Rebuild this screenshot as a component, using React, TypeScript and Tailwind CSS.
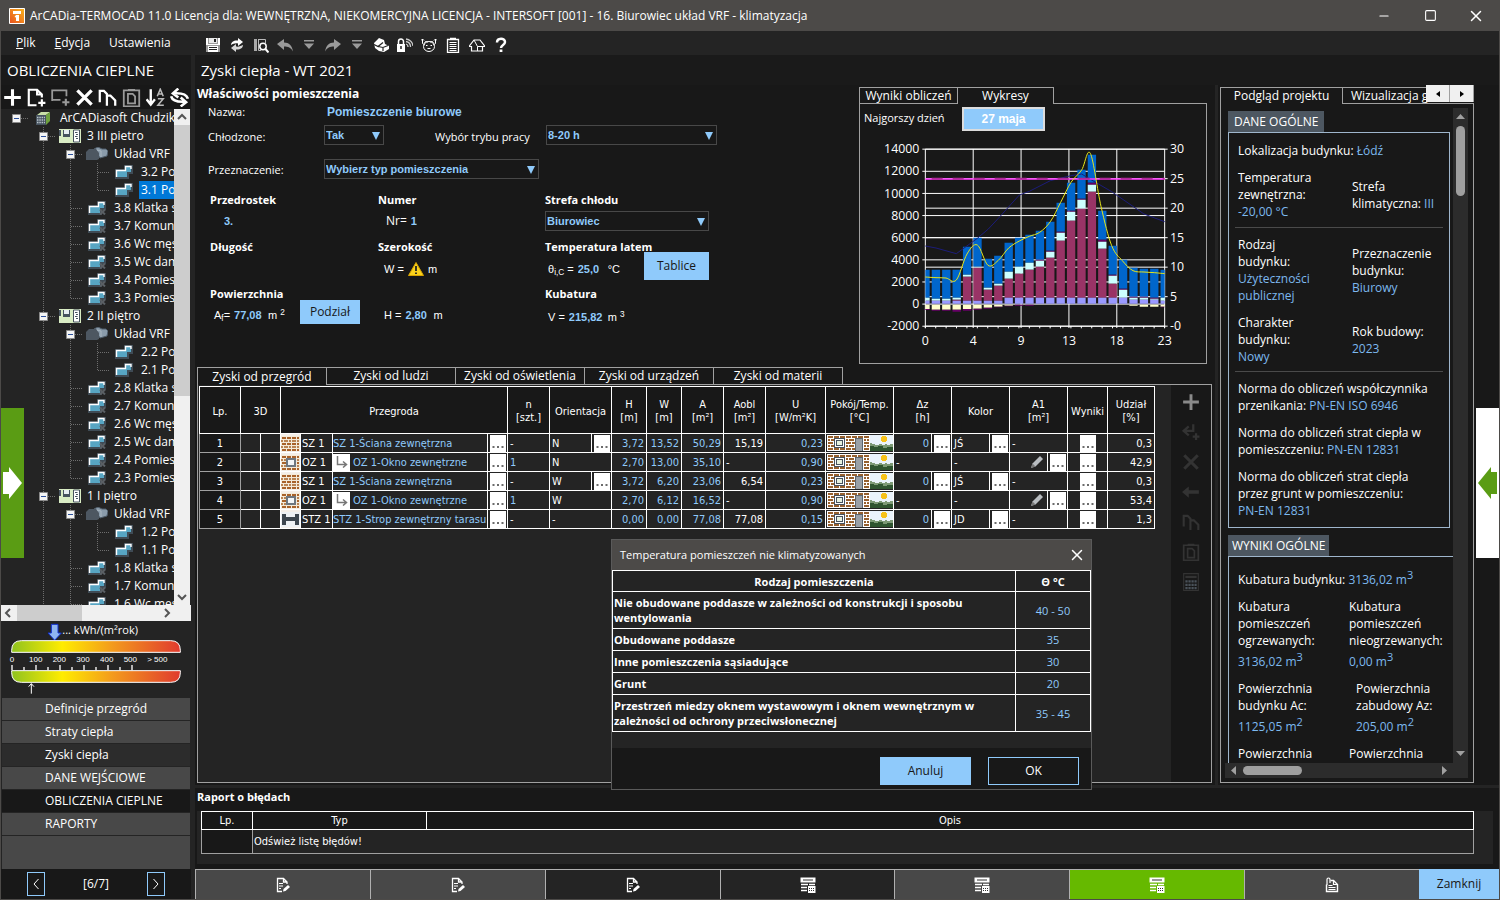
import React from "react";
import { Minus, Square, X } from "lucide-react";

type IconProps = { name: string; className?: string };

// small monochrome tool icons, 16x16 grid
const Icon = ({ name, className = "size-4" }: IconProps) => {
  const shapes: Record<string, React.ReactNode> = {
    save: (
      <>
        <path d="M1 1h14v14H1z" fill="#9a9a9a" />
        <path d="M1 1h2v6h10V1h2v7H1z" fill="#fff" />
        <path d="M4 1h8v5H4z" fill="#e8e8e8" />
        <path d="M9 2h2v3H9z" fill="#242424" />
        <path d="M3 9h10v6H3z" fill="#fff" />
        <path d="M4 10.500h8M4 12.500h8" stroke="#242424" />
      </>
    ),
    refresh: (
      <g fill="#fff">
        <path d="M2 8c0-3 3-5 7-4.500V1l5 4-5 4V6.500C6 6 4 7 2 8z" />
        <path d="M14 8c0 3-3 5-7 4.500V15l-5-4 5-4v2.500c3 .5 5-.5 7-1.500z" fill="#d8d8d8" />
      </g>
    ),
    preview: (
      <>
        <path d="M1 2h3v12H1z" fill="#aaa" />
        <path d="M5.500 2.500h7V6M5.500 2v11.500H8" fill="none" stroke="#bbb" />
        <circle cx="10" cy="9.500" r="3.200" fill="none" stroke="#fff" strokeWidth="1.500" />
        <path d="M12.500 12l3 3.500" stroke="#fff" strokeWidth="2" />
      </>
    ),
    undo: <path d="M0 7l7-5v3.500c5 0 8 3 9 9-2-4-5-5-9-5V13z" fill="#9a9a9a" />,
    redo: <path d="M16 7L9 2v3.500c-5 0-8 3-9 9 2-4 5-5 9-5V13z" fill="#9a9a9a" />,
    drop: <path d="M3 3h10v1.500H3zM3 6.500h10L8 12z" fill="#9a9a9a" />,
    cube: (
      <>
        <path d="M1 6l5-5 5 2 1 4 4 2v3l-5 3-5-1-4-3z" fill="#fff" />
        <path d="M1 7.500l4 2 5-4M5 9.500l5 1 5-2M10 10.500V14" fill="none" stroke="#242424" strokeWidth="1.200" />
      </>
    ),
    lock: (
      <>
        <path d="M0 7h8v8H0z" fill="#fff" />
        <path d="M1.500 7V4.500a2.500 2.500 0 015 0V7" fill="none" stroke="#fff" strokeWidth="1.500" />
        <path d="M4 9v3" stroke="#242424" strokeWidth="1.500" />
        <path d="M9 7a3 3 0 012 3M9 4.500a5.500 5.500 0 014.500 5.500M9 2a8 8 0 017 7" fill="none" stroke="#ccc" strokeWidth="1.300" />
      </>
    ),
    pig: (
      <>
        <path d="M0 3.500L1.500 2 3 3.500M1.500 2v4.500L4 8M16 3.500L14.500 2 13 3.500M14.500 2v4.500L12 8" fill="none" stroke="#fff" />
        <ellipse cx="8" cy="9.500" rx="5.500" ry="5" fill="none" stroke="#fff" />
        <path d="M3.500 6l1-1.500L7 5M12.500 6l-1-1.500L9 5M5 8.500h1.500M9.500 8.500H11M6.500 11.500h3" fill="none" stroke="#fff" />
      </>
    ),
    list: (
      <>
        <path d="M2.500 2.500h11v13h-11zM5 1.500h6" fill="none" stroke="#fff" strokeWidth="1.300" />
        <path d="M4.500 5.500h7M4.500 7.500h7M4.500 9.500h7M4.500 11.500h7M4.500 13.500h7" stroke="#fff" />
      </>
    ),
    house: (
      <>
        <path d="M0 9.500L5 3h6l5 6.500h-2.500V14h-11V9.500z" fill="none" stroke="#fff" strokeWidth="1.200" />
        <path d="M5 3l3.500 6.500V14M8.500 9.500h5" fill="none" stroke="#fff" />
      </>
    ),
    help: (
      <>
        <path d="M4 5.500c0-5 8-5 8-.5 0 3-4 2.800-4 6" fill="none" stroke="#fff" strokeWidth="2.500" />
        <path d="M6.600 12.500h2.800V15H6.600z" fill="#fff" />
      </>
    ),
    plus: <path d="M8 1v14M1 8h14" stroke="currentColor" strokeWidth="2.600" />,
    addPage: (
      <>
        <path d="M8 14.500H1.500v-13h7l4 4V8M8.500 1.500v4h4" fill="none" stroke="currentColor" strokeWidth="1.800" />
        <path d="M12.500 9.500v6M9.500 12.500h6" stroke="currentColor" strokeWidth="1.800" />
      </>
    ),
    addRoom: (
      <>
        <path d="M1 11V2h12v5M1 10h7" fill="none" stroke="#999" strokeWidth="1.500" />
        <path d="M12.500 9v6M9.500 12h6" stroke="#999" strokeWidth="1.800" />
      </>
    ),
    cross: <path d="M2 2l12 12M14 2L2 14" stroke="currentColor" strokeWidth="2.800" />,
    copy: (
      <path d="M1.500 12V2.500h3.500L7.500 5v8M7.500 15V6.500h3l4 4V15" fill="none" stroke="currentColor" strokeWidth="1.900" />
    ),
    paste: (
      <>
        <path d="M1.500 2h13v13.500h-13zM5 1.500h6" fill="none" stroke="currentColor" strokeWidth="1.500" />
        <path d="M5 5h4l2 2v6H5z" fill="none" stroke="currentColor" strokeWidth="1.500" />
      </>
    ),
    sort: (
      <>
        <path d="M4 1v12M0.500 9.500L4 14l3.500-4.500" fill="none" stroke="#fff" strokeWidth="2" />
        <path d="M9.500 7L12 1l2.500 6M10.300 5h3.400M10 9h4.500L10 14.500h5" fill="none" stroke="#bbb" strokeWidth="1.300" />
      </>
    ),
    sync: (
      <g fill="none" stroke="#fff" strokeWidth="2.200">
        <path d="M15 9c-1-4-5-5-12-4.500M7 .5l-4.500 4L7 8" />
        <path d="M1 7c1 4 5 5 12 4.500M9 8l4.500 4L9 15.500" />
      </g>
    ),
    enterPlus: (
      <>
        <path d="M10 1v6H3M6 3L1.500 7 6 11" fill="none" stroke="currentColor" strokeWidth="2" />
        <path d="M12.500 9v6M9.500 12h6" stroke="currentColor" strokeWidth="2" />
      </>
    ),
    left: <path d="M0 8l6-5v3.500h9v3H6V13z" fill="currentColor" />,
    calc: (
      <>
        <path d="M1.500.5h13v15h-13z" fill="none" stroke="currentColor" />
        <path d="M3 3.500h10" stroke="currentColor" strokeWidth="2" />
        <path d="M3 7.500h10M3 10.500h10M3 13.500h10" stroke="#4a525a" strokeWidth="2" strokeDasharray="2 .7" />
      </>
    ),
    docEdit: (
      <>
        <path d="M12 7V5L8.500 1.500h-6v13H7M8.500 1.500V5H12" fill="none" stroke="#fff" strokeWidth="1.300" />
        <path d="M4 6.500h4M4 9h4M4 11.500h2" stroke="#fff" />
        <path d="M8 14.500l.5-2.500L13 8l2 2-4.500 4z" fill="#fff" />
      </>
    ),
    report: (
      <>
        <path d="M0.500 0.500h15v5h-15z" fill="#fff" />
        <path d="M3 3h10" stroke="#333" />
        <path d="M1 7.500h7M1 10.500h6M1 13.500h6M9 7.500h6" stroke="#fff" strokeWidth="1.500" />
        <path d="M8 9h7.500v7H8z" fill="#fff" />
        <path d="M9 11.500h5M9 13.500h5" stroke="#333" strokeDasharray="1 1" />
      </>
    ),
    clipDoc: (
      <>
        <path d="M6.500 3.500h3l4 4v7h-11v-7" fill="none" stroke="#fff" strokeWidth="1.400" />
        <path d="M3 8V2.500C3 .5 6 .5 6 2.500V6M9.500 3.500v4h4" fill="none" stroke="#fff" strokeWidth="1.200" />
        <path d="M4.500 8.500h4M4.500 10.500h7M4.500 12.500h7" stroke="#fff" />
      </>
    ),
  };
  return (
    <svg viewBox="0 0 16 16" className={className} aria-hidden="true">
      {shapes[name]}
    </svg>
  );
};

const TitleBar = () => (
  <header className="flex h-[31px] shrink-0 items-center bg-[#4c4a48] pl-2 text-xs">
    <svg viewBox="0 0 16 16" className="mr-[5px] size-4" aria-hidden="true">
      <defs>
        <linearGradient id="logo" x1="0" y1="1" x2="1" y2="0">
          <stop offset="0" stopColor="#e8501e" />
          <stop offset="1" stopColor="#f9b51c" />
        </linearGradient>
      </defs>
      <path d="M.5.5h15v15H.5z" fill="url(#logo)" stroke="#fff" />
      <path d="M4 3h8v3H4zM7 7h3v6H7V9.500L5.500 9z" fill="#fff" />
    </svg>
    <span>
      ArCADia-TERMOCAD 11.0 Licencja dla: WEWNĘTRZNA, NIEKOMERCYJNA LICENCJA - INTERSOFT [001] - 16. Biurowiec układ VRF
      - klimatyzacja
    </span>
    <div className="ml-auto flex">
      <button aria-label="Minimalizuj" className="grid w-[46px] place-items-center">
        <Minus size={14} strokeWidth={2} />
      </button>
      <button aria-label="Maksymalizuj" className="grid w-[46px] place-items-center">
        <Square size={13} strokeWidth={2} />
      </button>
      <button aria-label="Zamknij okno" className="grid w-[46px] place-items-center">
        <X size={18} strokeWidth={2} />
      </button>
    </div>
  </header>
);

const tools = ["save", "refresh", "preview", "undo", "drop", "redo", "drop", "cube", "lock", "pig", "list", "house", "help"];

const MenuBar = () => (
  <nav className="flex h-6 shrink-0 items-center bg-[#242424] text-xs">
    <div className="flex w-[204px] pl-[15px]">
      <button className="mr-[19px]">
        <u>P</u>lik
      </button>
      <button className="mr-[19px]">
        <u>E</u>dycja
      </button>
      <button>Ustawienia</button>
    </div>
    <div className="flex gap-2 pt-[3px]">
      {tools.map((t, i) => (
        <button key={i} aria-label={t}>
          <Icon name={t} />
        </button>
      ))}
    </div>
  </nav>
);

// ---------- tree ----------

type TreeRow = { level: number; kind: "root" | "floor" | "system" | "room" | "roomOff"; label: string; last?: boolean; selected?: boolean };

const floor = (n: number, name: string): TreeRow[] => [
  { level: 1, kind: "floor", label: name },
  { level: 2, kind: "system", label: "Układ VRF" },
  { level: 3, kind: "room", label: `${n}.2 Po` },
  { level: 3, kind: "room", label: `${n}.1 Po`, last: true, selected: n === 3 },
  { level: 2, kind: "roomOff", label: `${n}.8 Klatka s` },
  { level: 2, kind: "roomOff", label: `${n}.7 Komuni` },
  { level: 2, kind: "roomOff", label: `${n}.6 Wc męs` },
  { level: 2, kind: "roomOff", label: `${n}.5 Wc dam` },
  { level: 2, kind: "roomOff", label: `${n}.4 Pomiesz` },
  { level: 2, kind: "roomOff", label: `${n}.3 Pomiesz`, last: true },
];

const treeRows: TreeRow[] = [
  { level: 0, kind: "root", label: "ArCADiasoft Chudzik" },
  ...floor(3, "3 III pietro"),
  ...floor(2, "2 II piętro"),
  ...floor(1, "1 I piętro").slice(0, 7),
];

const TreeIcon = ({ kind }: { kind: TreeRow["kind"] }) => {
  if (kind === "root")
    return (
      <svg viewBox="0 0 15 15" className="size-[15px]">
        <path d="M1 4l4-3h9l-4 3z" fill="#c9dfa8" />
        <path d="M10 4l4-3v9l-4 4z" fill="#6fa23f" />
        <path d="M0 4h10v10H0z" fill="#46525e" />
        <path d="M1 6.500h8M1 9h8M1 11.500h8" stroke="#b9c4cc" strokeWidth="1.500" strokeDasharray="1.500 .8" />
      </svg>
    );
  if (kind === "floor")
    return (
      <svg viewBox="0 0 22 14" className="h-[14px] w-[22px]">
        <path d="M0 0h22v14H0z" fill="#d9ecc4" />
        <path d="M0 1h2v6H0zM4 1h7v7H4z" fill="#46525e" />
        <path d="M5 1h5v4H5z" fill="#e8eef2" />
        <path d="M14.500 1h6v12h-6z" fill="#fff" stroke="#46525e" />
        <path d="M16 3.500h2.500M17 5.500h2M16 7.500h2.500M17 9.500h2" stroke="#46525e" />
      </svg>
    );
  if (kind === "system")
    return (
      <svg viewBox="0 0 22 14" className="h-[14px] w-[22px]">
        <path d="M8 2l4-2 4 2h4l2 2-1 5-7 2z" fill="#8a9baa" stroke="#4d5b68" />
        <path d="M0 5l3-3h7l3 4v6l-2 1H0z" fill="#4d5761" />
        <path d="M11 3l4 1v6" fill="none" stroke="#a9b6c0" />
      </svg>
    );
  return (
    <svg viewBox="0 0 18 14" className="h-[14px] w-[18px]">
      <path d="M0 4h9V0h9v9h-4v5H0z" fill="#3f4b55" />
      <path d="M2 6h9V2h5v5h-4v5H2z" fill="#57a5c3" />
      <path d="M1.500 12V5.500h9v-4h5.500V4" fill="none" stroke="#fff" strokeWidth="1.400" />
      {kind === "roomOff" && <path d="M12 8.500l5 5M17 8.500l-5 5" stroke="#5a5f64" strokeWidth="2" />}
    </svg>
  );
};

const Guide = ({ vertical, half, branch, box }: { vertical?: boolean; half?: boolean; branch?: boolean; box?: boolean }) => (
  <svg viewBox="0 0 27 18" className="h-[18px] w-[27px] shrink-0" aria-hidden="true">
    {vertical && <path d={half ? "M14.500 0v9" : "M14.500 0v18"} stroke="#6e6e6e" strokeDasharray="1 1" />}
    {branch && <path d="M15 9.500h12" stroke="#6e6e6e" strokeDasharray="1 1" />}
    {box && (
      <>
        <path d="M10.500 5.500h8v8h-8z" fill="#f4f4f4" stroke="#8a8a8a" />
        <path d="M12 9.500h5" stroke="#2a4f9c" />
      </>
    )}
  </svg>
);

const Chevron = ({ d }: { d: string }) => (
  <svg viewBox="-3 -4 16 16" className="size-4 shrink-0" aria-hidden="true">
    <path d={d} fill="none" stroke="currentColor" strokeWidth="2" />
  </svg>
);

const Tree = () => (
  <div className="flex min-h-0 flex-1 flex-col bg-[#242424]">
    <div className="flex min-h-0 flex-1">
      <ul className="min-w-0 flex-1 overflow-hidden pl-px text-xs">
        {treeRows.map((row, i) => {
          const expandable = row.kind !== "room" && row.kind !== "roomOff";
          return (
            <li key={i} className="flex h-[18px] items-center whitespace-nowrap">
              {Array.from({ length: row.level + 1 }, (_, l) => (
                <Guide
                  key={l}
                  vertical={l > 0}
                  half={l === row.level && row.last}
                  branch={l === row.level}
                  box={l === row.level && expandable}
                />
              ))}
              <span className="flex w-[31px] shrink-0 justify-center pr-[3px]">
                <TreeIcon kind={row.kind} />
              </span>
              <span className={row.selected ? "-ml-0.5 flex-1 bg-[#0078d7] pl-0.5 leading-[18px]" : "leading-[18px]"}>{row.label}</span>
            </li>
          );
        })}
      </ul>
      <div className="flex w-[17px] shrink-0 flex-col items-center border-r border-[#242424] bg-[#f0f0f0] text-[#555]">
        <Chevron d="M1 6l4-4 4 4" />
        <div className="h-[271px] w-4 bg-[#cdcdcd]" />
        <div className="mt-auto">
          <Chevron d="M1 2l4 4 4-4" />
        </div>
      </div>
    </div>
    <div className="flex h-4 shrink-0 items-center bg-[#f0f0f0] text-[#555]">
      <Chevron d="M6 0L2 4l4 4" />
      <div className="h-4 w-[65px] bg-[#cdcdcd]" />
      <div className="mr-4 ml-auto">
        <Chevron d="M3 0l4 4-4 4" />
      </div>
    </div>
  </div>
);

// energy scale under the tree
const Gauge = () => (
  <svg viewBox="3 60 570 231" className="h-[77px] w-full shrink-0">
    <defs>
      <linearGradient id="scale">
        <stop offset="0" stopColor="#8fc31f" />
        <stop offset=".3" stopColor="#ffec00" />
        <stop offset=".6" stopColor="#f39a1d" />
        <stop offset="1" stopColor="#e03a2e" />
      </linearGradient>
    </defs>
    <path d="M154 70h20v26h10l-20 22-20-22h10z" fill="#8fb4f0" stroke="#1030d0" strokeWidth="3" />
    <text x="187" y="98" fontSize="33" fill="#fff">
      ... kWh/(m²rok)
    </text>
    <path d="M35 154v-6q0-29 29-29h448q29 0 29 29v6z" fill="url(#scale)" stroke="#fff" strokeWidth="3" />
    <path d="M35 209v6q0 29 29 29h448q29 0 29-29v-6z" fill="url(#scale)" stroke="#fff" strokeWidth="3" />
    {["0", "100", "200", "300", "400", "500", "> 500"].map((t, i) => (
      <text
        key={t}
        x={i === 0 ? 36 : i === 6 ? 472 : 36 + i * 71}
        y="182"
        fontSize="24"
        textAnchor="middle"
        fill="#fff"
        className="font-['Liberation_Sans',sans-serif]"
      >
        {t}
      </text>
    ))}
    {Array.from({ length: 11 }, (_, i) => (
      <path key={i} d={`M${36 + i * 36} ${i % 2 ? 198 : 192}V208`} stroke="#fff" strokeWidth="4" />
    ))}
    <path d="M94 278v-30M86 257l8-9 8 9" fill="none" stroke="#fff" strokeWidth="3" />
  </svg>
);

const sections = [
  { label: "Definicje przegród", style: "bg-[#484848]" },
  { label: "Straty ciepła", style: "bg-[#484848]" },
  { label: "Zyski ciepła", style: "bg-[#2c2c2c]" },
  { label: "DANE WEJŚCIOWE", style: "bg-[#484848]" },
  { label: "OBLICZENIA CIEPLNE", style: "bg-[#181818]" },
  { label: "RAPORTY", style: "bg-[#484848]" },
];

const SideBar = () => (
  <aside className="relative flex w-[190px] shrink-0 flex-col">
    <h2 className="flex h-[30px] shrink-0 items-center bg-[#1a1a1a] pl-1.5 text-[15px]">OBLICZENIA CIEPLNE</h2>
    <div className="flex h-6 shrink-0 items-center justify-between bg-[#181818] px-0.5">
      {["plus", "addPage", "addRoom", "cross", "copy", "paste", "sort", "sync"].map((t) => (
        <button key={t} aria-label={t} className={t === "paste" ? "text-[#9a9a9a]" : "text-white"}>
          <Icon name={t} className="size-[19px]" />
        </button>
      ))}
    </div>
    <Tree />
    <Gauge />
    <div className="flex shrink-0 flex-col px-px">
      {sections.map((s) => (
        <button key={s.label} className={`mb-px h-[22px] pl-[43px] text-left text-xs ${s.style}`}>
          {s.label}
        </button>
      ))}
      <div className="h-[33px] bg-[#484848]" />
    </div>
    <div className="flex h-[30px] shrink-0 items-center justify-between bg-[#181818] px-[26px] text-xs">
      <button aria-label="Poprzedni" className="grid h-6 w-[18px] place-items-center border border-[#8fcafb]">
        <svg viewBox="0 0 6 12" className="h-3 w-1.5">
          <path d="M5.500 1L1 6l4.500 5" fill="none" stroke="#fff" />
        </svg>
      </button>
      <span>[6/7]</span>
      <button aria-label="Następny" className="grid h-6 w-[18px] place-items-center border border-[#8fcafb]">
        <svg viewBox="0 0 6 12" className="h-3 w-1.5">
          <path d="M.5 1L5 6 .5 11" fill="none" stroke="#fff" />
        </svg>
      </button>
    </div>
    <button aria-label="Rozwiń panel" className="absolute top-[353px] left-0 h-[150px] w-[23px] bg-[#5a9c14]">
      <svg viewBox="0 0 23 34" className="w-[23px]">
        <path d="M2 6h6V1l13 16L8 33v-5H2z" fill="#fff" />
      </svg>
    </button>
  </aside>
);

// ---------- room form ----------

const valueFont = "font-['Liberation_Sans',sans-serif] text-[11px] font-bold text-[#8fcafb]";

const Select = ({ label, value, width }: { label: string; value: string; width: string }) => (
  <span className={`relative block h-5 border border-[#484848] ${width} ${valueFont}`}>
    <select aria-label={label} defaultValue={value} className="block h-full w-full appearance-none bg-[#181818] pl-px outline-none">
      <option>{value}</option>
    </select>
    <svg viewBox="0 0 8 8" className="pointer-events-none absolute top-[6px] right-[3px] size-2">
      <path d="M0 0h8L4 8z" fill="#8fcafb" />
    </svg>
  </span>
);

const Value = ({ label, value, width }: { label: string; value: string; width: string }) => (
  <input aria-label={label} defaultValue={value} className={`bg-transparent outline-none ${width} ${valueFont}`} />
);

const sym = "font-['Liberation_Sans',sans-serif] text-[11px]";

const RoomForm = () => (
  <form className="relative flex min-w-0 flex-1 flex-col pl-[13px] text-[11px]">
    <h3 className="-ml-[11px] h-[17px] text-xs leading-[17px] font-bold">Właściwości pomieszczenia</h3>
    <div className="flex h-5 items-center">
      <label htmlFor="nazwa" className="w-[119px]">
        Nazwa:
      </label>
      <input
        id="nazwa"
        defaultValue="Pomieszczenie biurowe"
        className="w-48 bg-transparent font-['Liberation_Sans',sans-serif] text-xs font-bold text-[#8fcafb] outline-none"
      />
    </div>
    <div className="flex h-[26px] items-center">
      <span className="w-[116px] pt-1">Chłodzone:</span>
      <Select label="Chłodzone" value="Tak" width="w-[60px]" />
      <span className="w-[162px] pt-1 pl-[51px]">Wybór trybu pracy</span>
      <Select label="Wybór trybu pracy" value="8-20 h" width="w-[171px]" />
    </div>
    <div className="flex h-[42px] items-center">
      <span className="w-[116px] pt-0.5">Przeznaczenie:</span>
      <Select label="Przeznaczenie" value="Wybierz typ pomieszczenia" width="w-[215px]" />
    </div>
    <div className="grid grid-cols-[168px_167px_auto] grid-rows-[20px_22px_26px_22px_24px_22px] items-center pl-0.5">
      <b>Przedrostek</b>
      <b>Numer</b>
      <b>Strefa chłodu</b>
      <span className="pl-3.5">
        <Value label="Przedrostek" value="3." width="w-16" />
      </span>
      <span className="flex items-center gap-1 pl-2">
        <span className="text-xs">Nr=</span>
        <Value label="Numer" value="1" width="w-16" />
      </span>
      <Select label="Strefa chłodu" value="Biurowiec" width="w-[164px]" />
      <b className="pt-1">Długość</b>
      <b className="pt-1">Szerokość</b>
      <b className="pt-1">Temperatura latem</b>
      <span />
      <span className={`flex items-center gap-1 pl-1.5 ${sym}`}>
        W =
        <svg viewBox="0 0 16 14" className="h-3.5 w-4">
          <path d="M8 .5L15.500 13.500H.5z" fill="#fbd21c" stroke="#d8a400" />
          <path d="M8 4v5M8 10.500v1.500" stroke="#222" strokeWidth="1.800" />
        </svg>
        m
      </span>
      <span className={`flex items-center gap-1 pl-[3px] ${sym}`}>
        <span>
          θ<sub>i,C</sub> =
        </span>
        <Value label="Temperatura latem" value="25,0" width="w-[26px]" /> °C
      </span>
      <b className="pt-1">Powierzchnia</b>
      <span />
      <b className="pt-1">Kubatura</b>
      <span className={`flex items-center gap-1 pl-1 ${sym}`}>
        <span>
          A<sub>f</sub>=
        </span>
        <Value label="Powierzchnia" value="77,08" width="w-[30px]" />
        <span>
          m <sup>2</sup>
        </span>
      </span>
      <span className={`flex items-center gap-1 pl-1.5 ${sym}`}>
        H = <Value label="Wysokość" value="2,80" width="w-[24px]" /> m
      </span>
      <span className={`flex items-center gap-1 pt-1 pl-[3px] ${sym}`}>
        V = <Value label="Kubatura" value="215,82" width="w-[35px]" />
        <span>
          m <sup>3</sup>
        </span>
      </span>
    </div>
    <button type="button" className="absolute top-[215px] left-[105px] h-6 w-[60px] bg-[#8fcafb] text-xs text-[#181818]">
      Podział
    </button>
    <button type="button" className="absolute top-[167px] left-[449px] h-7 w-[65px] bg-[#8fcafb] text-xs text-[#181818]">
      Tablice
    </button>
  </form>
);

// ---------- chart ----------

// per hour: tops of the people, sun, lighting, devices and total layers, then the bottoms of the two losses
const bars = [
  [645, 645, 636, 636, 552, 670, 673],
  [645, 645, 639, 639, 552, 672, 675],
  [645, 645, 639, 639, 552, 672, 675],
  [645, 642, 636, 636, 552, 672, 678],
  [645, 573, 567, 567, 483, 670, 675],
  [645, 546, 543, 543, 456, 669, 672],
  [645, 612, 606, 606, 519, 666, 669],
  [645, 600, 594, 594, 510, 663, 665],
  [636, 579, 558, 558, 471, 660, 662],
  [636, 564, 543, 543, 456, 657, 660],
  [636, 552, 531, 531, 447, 657, 660],
  [636, 543, 525, 522, 435, 657, 657],
  [636, 516, 498, 495, 408, 657, 657],
  [636, 465, 441, 438, 351, 657, 657],
  [636, 405, 378, 375, 291, 657, 657],
  [636, 369, 342, 339, 252, 657, 657],
  [636, 318, 297, 291, 207, 657, 657],
  [636, 489, 468, 462, 375, 657, 657],
  [636, 594, 570, 567, 480, 657, 657],
  [636, 636, 612, 609, 522, 657, 657],
  [642, 642, 636, 633, 546, 660, 660],
  [642, 642, 636, 633, 549, 663, 663],
  [642, 642, 639, 636, 549, 663, 663],
  [645, 645, 636, 636, 552, 663, 665],
];

const gains = [
  [211, 574], [243, 576], [273, 577], [304, 583], [336, 505], [367, 478], [399, 539], [430, 524],
  [461, 487], [493, 466], [523, 452], [554, 440], [586, 408], [617, 350], [648, 290], [680, 253],
  [706, 203], [738, 362], [770, 480], [802, 525], [834, 555], [867, 559], [898, 561], [929, 564],
];

const smooth = (p: number[][]) => {
  let d = `M${p[0][0]} ${p[0][1]}`;
  for (let i = 0; i < p.length - 1; i++) {
    const a = p[i - 1] ?? p[i];
    const b = p[i];
    const c = p[i + 1];
    const e = p[i + 2] ?? c;
    d += `C${b[0] + (c[0] - a[0]) / 6} ${b[1] + (c[1] - a[1]) / 6} ${c[0] - (e[0] - b[0]) / 6} ${c[1] - (e[1] - b[1]) / 6} ${c[0]} ${c[1]}`;
  }
  return d;
};

const GainsChart = () => {
  const left = [14000, 12000, 10000, 8000, 6000, 4000, 2000, 0, -2000];
  const right = ["30", "25", "20", "15", "10", "5", "-0"];
  const hours = [0, 4, 9, 13, 18, 23];
  return (
    <svg viewBox="33 160 1005 630" className="mx-auto h-[210px] w-[335px]" fontSize="37">
      {left.map((v, i) => (
        <g key={v}>
          <path d={`M202 ${190.500 + i * 66.400}H929`} stroke="#fff" strokeWidth="3" />
          <text x="193" y={203 + i * 66.400} textAnchor="end" fill="#fff">
            {v}
          </text>
        </g>
      ))}
      {right.map((v, i) => (
        <g key={v}>
          <path d={`M211 ${190.500 + i * 88.500}H938`} stroke="#fff" strokeWidth="3" />
          <text x="945" y={203 + i * 88.500} fill="#fff">
            {v}
          </text>
        </g>
      ))}
      {hours.map((h, i) => (
        <g key={h}>
          <path d={`M${211 + i * 143.600} 190V727`} stroke="#fff" strokeWidth="3" />
          <text x={211 + i * 143.600} y="779" textAnchor="middle" fill="#fff">
            {h}
          </text>
        </g>
      ))}
      <clipPath id="plot">
        <path d="M211 185h718v540H211z" />
      </clipPath>
      <g clipPath="url(#plot)">
        {bars.map(([people, sun, light, dev, total, loss, loss2], i) => {
          const x = 199 + i * 31.200;
          return (
            <g key={i}>
              <path d={`M${x} ${total}h25V${dev}h-25z`} fill="#0066cc" />
              <path d={`M${x} ${dev}h25V${light}h-25z`} fill="#660066" />
              <path d={`M${x} ${light}h25V${sun}h-25z`} fill="#ccffff" />
              <path d={`M${x} ${sun}h25V${people}h-25z`} fill="#993366" />
              <path d={`M${x} ${people}h25V654h-25z`} fill="#9999ff" />
              <path d={`M${x} 657h25V${loss}h-25z`} fill="#ffffcc" />
              <path d={`M${x} ${loss}h25V${loss2}h-25z`} fill="#660066" />
            </g>
          );
        })}
      </g>
      {Array.from({ length: 24 }, (_, i) => (
        <path key={i} d={`M${211 + i * 31.200} 721v7`} stroke="#fff" strokeWidth="3" />
      ))}
      <path
        d="M211 481L243 487L304 504L367 458L400 430L430 398L493 328L523 317L586 285L648 270L680 265L708 282L770 318L867 385L929 408"
        fill="none"
        stroke="#1c1c7a"
        strokeWidth="3"
      />
      <path d="M211 280H929" stroke="#ff33ff" strokeWidth="4" />
      <path d="M230 279H929" stroke="#b0289a" strokeWidth="6" strokeDasharray="33 30" />
      <path d={smooth(gains)} fill="none" stroke="#e6e619" strokeWidth="3" />
    </svg>
  );
};

const ChartPanel = () => (
  <section className="mt-0.5 mr-2 flex w-[348px] shrink-0 flex-col self-start">
    <div className="flex h-[17px] text-xs leading-4">
      <button className="w-[98px] border-t border-l border-[#a0a0a0]">Wyniki obliczeń</button>
      <button className="w-[97px] border-x border-t border-[#a0a0a0]">Wykresy</button>
      <span className="flex-1 border-b border-[#a0a0a0]" />
    </div>
    <div className="flex flex-col border-x border-b border-[#a0a0a0] pb-[14px]">
      <div className="-mt-px h-px w-[97px] bg-[#a0a0a0]" />
      <div className="flex h-[35px] items-start pt-[3px] pl-1 text-xs">
        <span className="w-[98px] pt-1 text-[11px]">Najgorszy dzień</span>
        <button className="h-6 w-[83px] border-2 border-[#dcdcdc] bg-[#8fcafb] font-['Liberation_Sans',sans-serif] font-bold text-white">
          27 maja
        </button>
      </div>
      <GainsChart />
    </div>
  </section>
);

// ---------- partitions table ----------

const WallIcon = ({ kind }: { kind: string }) => (
  <svg viewBox="0 0 19 15" className="mx-auto h-[15px] w-[19px]" aria-hidden="true" shapeRendering="crispEdges">
    <path d="M0 0h19v15H0z" fill="#f3ead9" />
    {kind === "STZ" ? (
      <>
        <path d="M0 0h19v15H0z" fill="#eef1f3" />
        <path d="M1 2h4v3h9V2h4v11h-4V9H5v4H1z" fill="#3d464e" />
      </>
    ) : (
      <>
        <path d="M1 2h17M1 8h17M1 14h17" stroke="#a8622a" strokeWidth="2" strokeDasharray="4 1" />
        <path d="M0 5h19M0 11h19" stroke="#b98352" strokeWidth="2" strokeDasharray="2 1 4 1" />
      </>
    )}
    {kind === "OZ" && (
      <>
        <path d="M5 3h10v9H5z" fill="#6d7780" />
        <path d="M7 5h6v5H7z" fill="#f2f5f7" />
      </>
    )}
  </svg>
);

const RoomTemp = () => (
  <svg viewBox="0 0 66 16" className="mx-auto h-4 w-[66px]" aria-hidden="true" shapeRendering="crispEdges">
    <path d="M0 0h66v16H0z" fill="#fff" />
    <path d="M1 2h41M1 8h41M1 14h41" stroke="#96602e" strokeWidth="2" strokeDasharray="5 1" />
    <path d="M1 5h41M1 11h41" stroke="#96602e" strokeWidth="2" strokeDasharray="2 1 5 1" />
    <path d="M7.500 3.500h10v9h-10z" fill="#fff" stroke="#46525e" />
    <path d="M9.500 5.500h6v5h-6z" fill="#e8f2e0" stroke="#46525e" />
    <path d="M28 3h7v13h-7z" fill="#9aa0a6" stroke="#5b6670" />
    <path d="M43 0h23v16H43z" fill="#eaf3fb" />
    <path d="M43 8h2v1h3v1h4V9h3v1h3V9h2v1h3V9h3v7H43z" fill="#7d9a76" />
    <path d="M43 11h4v1h4v-1h5v2h4v-1h6v4H43z" fill="#2f5530" />
    <circle cx="57" cy="4" r="3" fill="#f7c21a" />
  </svg>
);

const Dots = () => (
  <button aria-label="Wybierz" className="mx-auto block h-[17px] w-4 bg-white">
    <svg viewBox="0 0 16 17" className="h-[17px] w-4">
      <path d="M2.500 12h11" stroke="#6b6b6b" strokeWidth="2" strokeDasharray="2 2.500" />
    </svg>
  </button>
);

const partitions = [
  { lp: 1, kind: "SZ", name: "SZ 1-Ściana zewnętrzna", n: "-", dir: "N", h: "3,72", w: "13,52", a: "50,29", aobl: "15,19", u: "0,23", dz: "0", color: "JŚ", share: "0,3" },
  { lp: 2, kind: "OZ", name: "OZ 1-Okno zewnętrzne", n: "1", dir: "N", h: "2,70", w: "13,00", a: "35,10", aobl: "-", u: "0,90", dz: "-", color: "-", share: "42,9" },
  { lp: 3, kind: "SZ", name: "SZ 1-Ściana zewnętrzna", n: "-", dir: "W", h: "3,72", w: "6,20", a: "23,06", aobl: "6,54", u: "0,23", dz: "0", color: "JŚ", share: "0,3" },
  { lp: 4, kind: "OZ", name: "OZ 1-Okno zewnętrzne", n: "1", dir: "W", h: "2,70", w: "6,12", a: "16,52", aobl: "-", u: "0,90", dz: "-", color: "-", share: "53,4" },
  { lp: 5, kind: "STZ", name: "STZ 1-Strop zewnętrzny tarasu", n: "-", dir: "-", h: "0,00", w: "0,00", a: "77,08", aobl: "77,08", u: "0,15", dz: "0", color: "JD", share: "1,3" },
];

const columns = [
  "w-[41px]", "w-[20px]", "w-[20px]", "w-[20px]", "w-[32px]", "w-[155px]", "w-[20px]", "w-[42px]", "w-[42px]", "w-[20px]",
  "w-[35px]", "w-[35px]", "w-[42px]", "w-[42px]", "w-[60px]", "w-[68px]", "w-[38px]", "w-[20px]", "w-[38px]", "w-[20px]",
  "w-[38px]", "w-[20px]", "w-[40px]", "w-[47px]",
];

const heads: { text: string; unit?: string; span?: number }[] = [
  { text: "Lp." },
  { text: "3D", span: 2 },
  { text: "Przegroda", span: 4 },
  { text: "n", unit: "[szt.]" },
  { text: "Orientacja", span: 2 },
  { text: "H", unit: "[m]" },
  { text: "W", unit: "[m]" },
  { text: "A", unit: "[m²]" },
  { text: "Aobl", unit: "[m²]" },
  { text: "U", unit: "[W/m²K]" },
  { text: "Pokój/Temp.", unit: "[°C]" },
  { text: "Δz", unit: "[h]", span: 2 },
  { text: "Kolor", span: 2 },
  { text: "A1", unit: "[m²]", span: 2 },
  { text: "Wyniki" },
  { text: "Udział", unit: "[%]" },
];

const cell = "border border-white px-0.5";
const num = "border border-white px-0.5 text-right text-[#8fcafb]";

const PartitionsTable = () => (
  <table className="w-[956px] table-fixed border-collapse font-['DejaVu_Sans_Condensed','DejaVu_Sans',sans-serif] text-[11px] leading-[13px] whitespace-nowrap">
    <colgroup>
      {columns.map((c, i) => (
        <col key={i} className={c} />
      ))}
    </colgroup>
    <thead className="bg-[#181818]">
      <tr className="h-[47px]">
        {heads.map((h) => (
          <th key={h.text} colSpan={h.span} className="border border-white pt-0.5 font-normal">
            {h.text}
            {h.unit && (
              <>
                <br />
                {h.unit}
              </>
            )}
          </th>
        ))}
      </tr>
    </thead>
    <tbody>
      {partitions.map((p) => {
        const opening = p.kind === "OZ";
        const dirButton = p.kind === "SZ";
        return (
          <tr key={p.lp} className="h-[19px]">
            <td className="border border-[#a0a0a0] bg-[#181818] text-center">{p.lp}</td>
            <td className={cell} />
            <td className={cell} />
            <td className="border border-white bg-[#f4efe8] p-0">
              <WallIcon kind={p.kind} />
            </td>
            <td className="border border-white pl-px">{p.kind} 1</td>
            <td className="border border-white p-0 text-[#8fcafb]">
              <span className="flex items-center gap-[3px]">
                {opening && (
                  <span className="grid size-[17px] place-items-center bg-white">
                    <svg viewBox="0 0 12 12" className="size-3">
                      <path d="M1.500 0v8.500H10M7 5.500l3.500 3L7 11.500" fill="none" stroke="#777" strokeWidth="1.500" />
                    </svg>
                  </span>
                )}
                {p.name}
              </span>
            </td>
            <td className="border border-white p-0">
              <Dots />
            </td>
            <td className={p.n === "1" ? "border border-white px-0.5 text-[#8fcafb]" : cell}>{p.n}</td>
            <td className={cell} colSpan={dirButton ? 1 : 2}>
              {p.dir}
            </td>
            {dirButton && (
              <td className="border border-white p-0">
                <Dots />
              </td>
            )}
            <td className={num}>{p.h}</td>
            <td className={num}>{p.w}</td>
            <td className={num}>{p.a}</td>
            <td className={p.aobl === "-" ? cell : "border border-white px-0.5 text-right"}>{p.aobl}</td>
            <td className={num}>{p.u}</td>
            <td className="border border-white p-0">
              <RoomTemp />
            </td>
            {opening ? (
              <>
                <td className={cell} colSpan={2}>
                  {p.dz}
                </td>
                <td className={cell} colSpan={2}>
                  {p.color}
                </td>
                <td className="border border-white p-0">
                  <svg viewBox="0 0 14 14" className="mr-[3px] ml-auto size-3.5">
                    <path d="M1 13l1.500-4.500L10 1l3 3-7.500 7.500z" fill="#b9bdc1" />
                    <path d="M1 13l1.500-4.500 3 3z" fill="#777" />
                  </svg>
                </td>
                <td className="border border-white p-0">
                  <Dots />
                </td>
              </>
            ) : (
              <>
                <td className={num}>{p.dz}</td>
                <td className="border border-white p-0">
                  <Dots />
                </td>
                <td className={cell}>{p.color}</td>
                <td className="border border-white p-0">
                  <Dots />
                </td>
                <td className={cell} colSpan={2}>
                  -
                </td>
              </>
            )}
            <td className="border border-white p-0">
              <Dots />
            </td>
            <td className="border border-white px-0.5 text-right">{p.share}</td>
          </tr>
        );
      })}
    </tbody>
  </table>
);

const GainsPanel = () => (
  <section className="mr-[3px] mb-0.5 ml-0.5 flex min-h-0 flex-1 flex-col">
    <div className="flex h-[18px] text-xs leading-4">
      <button className="w-[129px] border-t border-l border-[#a0a0a0]">Zyski od przegród</button>
      <button className="w-[129px] border-t border-b border-l border-[#a0a0a0]">Zyski od ludzi</button>
      <button className="w-[129px] border-t border-b border-l border-[#a0a0a0]">Zyski od oświetlenia</button>
      <button className="w-[129px] border-t border-b border-l border-[#a0a0a0]">Zyski od urządzeń</button>
      <button className="w-[130px] border border-[#a0a0a0]">Zyski od materii</button>
      <span className="flex-1 border-b border-[#a0a0a0]" />
    </div>
    <div className="flex flex-1 border-x border-b border-[#a0a0a0] bg-[#242424]">
      <div className="min-w-0 flex-1 overflow-hidden pt-px pl-px">
        <PartitionsTable />
      </div>
      <div className="flex w-10 shrink-0 flex-col items-center gap-3 bg-[#181818] pt-2 text-[#333]">
        {["plus", "enterPlus", "cross", "left", "copy", "paste", "calc"].map((t, i) => (
          <button key={t} aria-label={t} className={i === 0 ? "text-[#8a8a8a]" : ""}>
            <Icon name={t} className="size-[18px]" />
          </button>
        ))}
      </div>
    </div>
  </section>
);

// ---------- project preview ----------

const Item = ({ label, value, sup }: { label: string; value: string; sup?: string }) => (
  <p>
    {label}{" "}
    <span className="whitespace-nowrap text-[#7db9ef]">
      {value}
      {sup && <sup className="static align-super text-[11px] leading-[15px]">{sup}</sup>}
    </span>
  </p>
);

const ProjectPanel = () => (
  <aside className="flex w-[284px] shrink-0 border-l-[3px] border-[#242424] bg-[#181818]">
    <section className="relative mt-0.5 mb-0.5 ml-0.5 flex w-[254px] flex-col">
      <div className="flex h-[17px] text-xs leading-4">
        <button className="w-[122px] border-t border-l border-[#a0a0a0]">Podgląd projektu</button>
        <button className="flex-1 overflow-hidden border-t border-b border-l border-[#a0a0a0] pl-2 text-left whitespace-nowrap">
          Wizualizacja g
        </button>
      </div>
      <div className="absolute -top-0.5 right-0 flex h-[17px] w-12 bg-[#f0f0f0]">
        <button aria-label="W lewo" className="grid flex-1 place-items-center border-r border-[#a0a0a0]">
          <svg viewBox="0 0 4 6" className="h-1.5 w-1">
            <path d="M4 0v6L0 3z" />
          </svg>
        </button>
        <button aria-label="W prawo" className="grid flex-1 place-items-center border-r border-[#a0a0a0]">
          <svg viewBox="0 0 4 6" className="h-1.5 w-1">
            <path d="M0 0v6l4-3z" />
          </svg>
        </button>
      </div>
      <div className="flex min-h-0 flex-1 flex-col border-x border-b border-[#a0a0a0] pt-1 pr-[5px] pb-1 pl-1">
        <div className="flex min-h-0 flex-1">
          <div className="min-w-0 flex-1 overflow-hidden pt-[3px] pl-[3px] text-xs leading-[17px]">
            <h4 className="w-fit bg-[#4d5761] px-1.5 py-0.5">DANE OGÓLNE</h4>
            <div className="mr-[3px] flex flex-col gap-2.5 border border-[#9fb6cc] px-1.5 pt-[9px] pb-2">
              <div className="px-[3px]">
                <Item label="Lokalizacja budynku:" value="Łódź" />
              </div>
              <div className="-mb-1 grid grid-cols-[114px_1fr] items-center border-b border-[#4a4a4a] px-[3px] pb-[7px]">
                <p className="w-20">
                  Temperatura zewnętrzna: <span className="whitespace-nowrap text-[#7db9ef]">-20,00 °C</span>
                </p>
                <Item label="Strefa klimatyczna:" value="III" />
              </div>
              <div className="-mb-1 grid grid-cols-[114px_1fr] items-center gap-y-2.5 border-b border-[#4a4a4a] px-[3px] pt-0.5 pb-[6px]">
                <p>
                  Rodzaj
                  <br />
                  budynku:
                  <br />
                  <span className="text-[#7db9ef]">Użyteczności publicznej</span>
                </p>
                <Item label="Przeznaczenie budynku:" value="Biurowy" />
                <p>
                  Charakter
                  <br />
                  budynku:
                  <br />
                  <span className="text-[#7db9ef]">Nowy</span>
                </p>
                <Item label="Rok budowy:" value="2023" />
              </div>
              <div className="flex flex-col gap-2.5 px-[3px] pt-0.5">
                <Item label="Norma do obliczeń współczynnika przenikania:" value="PN-EN ISO 6946" />
                <Item label="Norma do obliczeń strat ciepła w pomieszczeniu:" value="PN-EN 12831" />
                <Item label="Norma do obliczeń strat ciepła przez grunt w pomieszczeniu:" value="PN-EN 12831" />
              </div>
            </div>
            <h4 className="mt-[7px] w-fit bg-[#4d5761] px-1 py-0.5">WYNIKI OGÓLNE</h4>
            <div className="flex flex-col gap-2.5 border border-r-0 border-[#9fb6cc] pt-2.5 pl-[9px]">
              <Item label="Kubatura budynku:" value="3136,02 m" sup="3" />
              <div className="grid grid-cols-[111px_1fr]">
                <Item label="Kubatura pomieszczeń ogrzewanych:" value="3136,02 m" sup="3" />
                <Item label="Kubatura pomieszczeń nieogrzewanych:" value="0,00 m" sup="3" />
              </div>
              <div className="grid grid-cols-[118px_1fr]">
                <div className="w-24">
                  <Item label="Powierzchnia budynku Ac:" value="1125,05 m" sup="2" />
                </div>
                <Item label="Powierzchnia zabudowy Az:" value="205,00 m" sup="2" />
              </div>
              <div className="grid grid-cols-[111px_1fr]">
                <p>
                  Powierzchnia
                  <br />
                  budynku
                </p>
                <p>
                  Powierzchnia
                  <br />
                  budynku
                </p>
              </div>
            </div>
          </div>
          <div className="flex w-[15px] shrink-0 flex-col items-center bg-[#2c2c2c] pt-1.5">
            <svg viewBox="0 0 9 5" className="h-[5px] w-[9px]">
              <path d="M0 5L4.500 0 9 5z" fill="#a0a0a0" />
            </svg>
            <div className="mt-[7px] h-[70px] w-[9px] rounded-full bg-[#9f9f9f]" />
            <svg viewBox="0 0 9 5" className="mt-auto mb-[7px] h-[5px] w-[9px]">
              <path d="M0 0l4.500 5L9 0z" fill="#a0a0a0" />
            </svg>
          </div>
        </div>
        <div className="flex h-[15px] shrink-0 items-center bg-[#2c2c2c] pl-1.5">
          <svg viewBox="0 0 5 9" className="h-[9px] w-[5px]">
            <path d="M5 0L0 4.500 5 9z" fill="#a0a0a0" />
          </svg>
          <div className="ml-[7px] h-[9px] w-[59px] rounded-full bg-[#9f9f9f]" />
          <svg viewBox="0 0 5 9" className="mr-[21px] ml-auto h-[9px] w-[5px]">
            <path d="M0 0l5 4.500L0 9z" fill="#a0a0a0" />
          </svg>
        </div>
      </div>
    </section>
  </aside>
);

const ErrorReport = () => (
  <section className="shrink-0 border-t-[3px] border-[#242424] bg-[#181818] pr-1.5 pb-[5px] pl-0.5">
    <h3 className="h-[23px] text-[11px] leading-[18px] font-bold">Raport o błędach</h3>
    <div className="bg-[#242424] pr-[19px] pb-[10px] pl-1">
      <table className="w-full table-fixed border-collapse font-['DejaVu_Sans_Condensed','DejaVu_Sans',sans-serif] text-[11px] leading-[13px]">
        <colgroup>
          <col className="w-[51px]" />
          <col className="w-[174px]" />
          <col />
        </colgroup>
        <thead className="bg-[#181818]">
          <tr className="h-[18px]">
            <th className="border border-white font-normal">Lp.</th>
            <th className="border border-white font-normal">Typ</th>
            <th className="border border-white font-normal">Opis</th>
          </tr>
        </thead>
        <tbody>
          <tr className="h-6">
            <td className="border border-[#a0a0a0] bg-[#181818]" />
            <td colSpan={2} className="border border-[#a0a0a0] px-px">
              Odśwież listę błędów!
            </td>
          </tr>
        </tbody>
      </table>
    </div>
  </section>
);

const bottomTools = [
  { icon: "docEdit", bg: "bg-[#484848]" },
  { icon: "docEdit", bg: "bg-[#484848]" },
  { icon: "docEdit", bg: "bg-[#242424]" },
  { icon: "report", bg: "bg-[#242424]" },
  { icon: "report", bg: "bg-[#484848]" },
  { icon: "report", bg: "bg-[#66b900]" },
  { icon: "clipDoc", bg: "bg-[#484848]" },
];

const BottomBar = () => (
  <footer className="flex h-[30px] shrink-0">
    {bottomTools.map((t, i) => (
      <button key={i} aria-label={t.icon} className={`grid flex-1 place-items-center border-t border-l border-[#b0b0b0] ${t.bg}`}>
        <Icon name={t.icon} className="size-4" />
      </button>
    ))}
    <button className="w-20 bg-[#8fcafb] text-xs text-[#181818]">Zamknij</button>
  </footer>
);

const temperatures = [
  ["Nie obudowane poddasze w zależności od konstrukcji i sposobu wentylowania", "40 - 50"],
  ["Obudowane poddasze", "35"],
  ["Inne pomieszczenia sąsiadujące", "30"],
  ["Grunt", "20"],
  ["Przestrzeń miedzy oknem wystawowym i oknem wewnętrznym w zależności od ochrony przeciwsłonecznej", "35 - 45"],
];

const TemperatureDialog = () => (
  <div role="dialog" aria-label="Temperatura pomieszczeń" className="absolute top-[539px] left-[610px] w-[481px] border border-[#5a5a5a] bg-[#242424]">
    <div className="flex h-[30px] items-center justify-between bg-[#4c4a48] pr-[5px] pl-2 text-[11px]">
      Temperatura pomieszczeń nie klimatyzowanych
      <button aria-label="Zamknij">
        <X size={18} strokeWidth={2} />
      </button>
    </div>
    <table className="w-full table-fixed border-collapse text-[11px] leading-[15px]">
      <colgroup>
        <col />
        <col className="w-[75px]" />
      </colgroup>
      <thead>
        <tr className="h-[21px]">
          <th className="border border-white">Rodzaj pomieszczenia</th>
          <th className="border border-white">Θ °C</th>
        </tr>
      </thead>
      <tbody>
        {temperatures.map(([room, temp]) => (
          <tr key={room} className="h-[22px]">
            <th className="border border-white px-px py-[3px] text-left">{room}</th>
            <td className="border border-white text-center text-[#8fcafb]">{temp}</td>
          </tr>
        ))}
      </tbody>
    </table>
    <div className="mt-4 flex h-[41px] items-center justify-end gap-[17px] bg-[#181818] pt-[5px] pr-3 text-xs">
      <button className="h-7 w-[91px] bg-[#8fcafb] text-[#181818]">Anuluj</button>
      <button className="h-7 w-[91px] border border-[#8fcafb]">OK</button>
    </div>
  </div>
);

const App = () => {
  return (
    <div className="relative flex h-screen flex-col overflow-hidden border border-[#4c4a48] border-t-0 bg-[#242424] font-['Open_Sans','Noto_Sans',sans-serif] text-white">
      <TitleBar />
      <MenuBar />
      <div className="flex min-h-0 flex-1">
        <SideBar />
        <main className="ml-1 flex min-w-0 flex-1 flex-col">
          <h1 className="flex h-[30px] shrink-0 items-center bg-[#1a1a1a] pl-1.5 text-[15px]">Zyski ciepła - WT 2021</h1>
          <div className="flex min-h-0 flex-1">
            <div className="flex min-w-0 flex-1 flex-col bg-[#181818]">
              <div className="flex h-[282px] shrink-0">
                <RoomForm />
                <ChartPanel />
              </div>
              <GainsPanel />
            </div>
            <ProjectPanel />
          </div>
          <ErrorReport />
          <BottomBar />
        </main>
      </div>
      <button aria-label="Rozwiń podgląd" className="absolute top-[408px] right-0 h-[150px] w-[23px] bg-white">
        <svg viewBox="0 0 23 34" className="w-[23px]">
          <path d="M21 6h-6V1L2 17l13 16v-5h6z" fill="#5a9c14" />
        </svg>
      </button>
      <TemperatureDialog />
    </div>
  );
};

export default App;
